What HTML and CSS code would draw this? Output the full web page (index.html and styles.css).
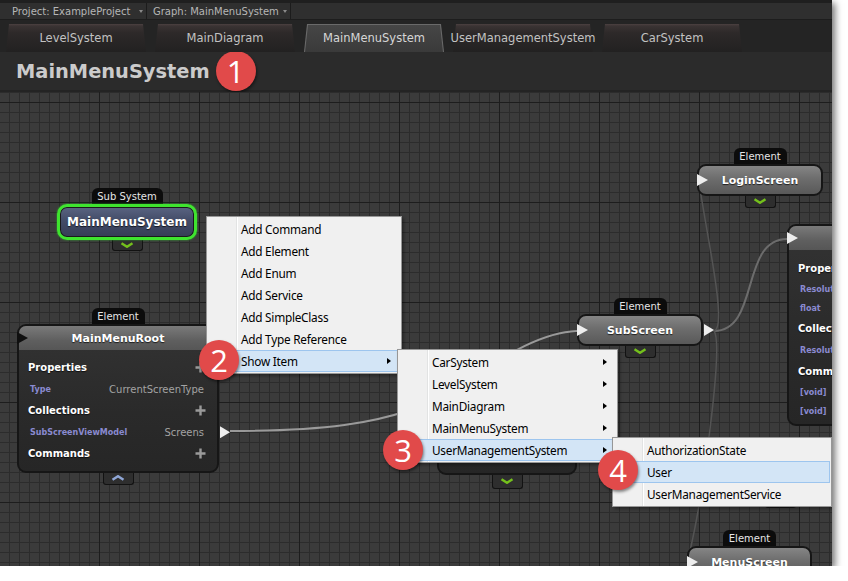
FILE: index.html
```html
<!DOCTYPE html>
<html lang="en">
<head>
<meta charset="utf-8">
<title>MainMenuSystem</title>
<link rel="stylesheet" href="styles.css">
</head>
<body>
<div class="window">
  <div class="topstrip"></div>
  <div class="toolbar">
    <div class="tb-item tb-project"><span>Project: ExampleProject</span><span class="caret"></span></div>
    <div class="tb-item tb-graph"><span>Graph: MainMenuSystem</span><span class="caret"></span></div>
  </div>
  <div class="tabs">
    <div class="tab"><span class="tab-text">LevelSystem</span></div>
    <div class="tab"><span class="tab-text">MainDiagram</span></div>
    <div class="tab active"><span class="tab-text">MainMenuSystem</span></div>
    <div class="tab"><span class="tab-text">UserManagementSystem</span></div>
    <div class="tab"><span class="tab-text">CarSystem</span></div>
  </div>
  <div class="titlebar">
    <h1 class="title">MainMenuSystem</h1>
    <span class="badge">1</span>
  </div>
  <div class="canvas">
    <svg class="wires" width="832" height="474" viewBox="0 0 832 474">
      <path class="wire light" d="M230,339 C330,339 375,330 410,318 C460,301 520,241 577,239"/>
      <path class="wire" d="M714,239 C760,239 740,147 787,147"/>
      <path class="wire faint" d="M714,239 C728,236 706,140 700,96"/>
      <path class="wire faint" d="M714,239 C724,252 702,410 689,463"/>
    </svg>

    <!-- Sub System node -->
    <div class="nw nw-subsys">
      <div class="label label-sub">Sub System</div>
      <div class="node subsys">MainMenuSystem</div>
      <div class="chev chev-sub"><svg width="14" height="6" viewBox="0 0 14 6"><path d="M1.5 1.2 L7 4.8 L12.5 1.2" class="chev-down"/></svg></div>
    </div>

    <!-- MainMenuRoot element -->
    <div class="nw nw-root">
      <div class="label">Element</div>
      <div class="node full root">
        <div class="head"><span class="port-in dark"></span>MainMenuRoot</div>
        <div class="body">
          <div class="row sec"><span>Properties</span><svg class="plus" width="11" height="11" viewBox="0 0 11 11"><path d="M5.5 0.5 V10.5 M0.5 5.5 H10.5"/></svg></div>
          <div class="row item"><span class="ptype">Type</span><span class="pval">CurrentScreenType</span></div>
          <div class="row sec"><span>Collections</span><svg class="plus" width="11" height="11" viewBox="0 0 11 11"><path d="M5.5 0.5 V10.5 M0.5 5.5 H10.5"/></svg></div>
          <div class="row item"><span class="ptype">SubScreenViewModel</span><span class="pval">Screens</span><span class="port-out side"></span></div>
          <div class="row sec"><span>Commands</span><svg class="plus" width="11" height="11" viewBox="0 0 11 11"><path d="M5.5 0.5 V10.5 M0.5 5.5 H10.5"/></svg></div>
        </div>
      </div>
      <div class="chev chev-root"><svg width="14" height="6" viewBox="0 0 14 6"><path d="M1.5 4.8 L7 1.2 L12.5 4.8" class="chev-up"/></svg></div>
    </div>

    <!-- LoginScreen -->
    <div class="nw nw-login">
      <div class="label">Element</div>
      <div class="node gray"><span class="port-in"></span>LoginScreen</div>
      <div class="chev"><svg width="14" height="6" viewBox="0 0 14 6"><path d="M1.5 1.2 L7 4.8 L12.5 1.2" class="chev-down"/></svg></div>
    </div>

    <!-- SubScreen -->
    <div class="nw nw-sub">
      <div class="label">Element</div>
      <div class="node gray"><span class="port-in"></span>SubScreen<span class="port-out"></span></div>
      <div class="chev"><svg width="14" height="6" viewBox="0 0 14 6"><path d="M1.5 1.2 L7 4.8 L12.5 1.2" class="chev-down"/></svg></div>
    </div>

    <!-- right partial element (cut by the window edge) -->
    <div class="nw nw-right">
      <div class="node full right">
        <div class="head"><span class="port-in"></span></div>
        <div class="body body-right">
          <div class="row sec r21"><span>Proper</span></div>
          <div class="row item r20"><span class="ptype">Resolut</span></div>
          <div class="row item r18"><span class="ptype">float</span></div>
          <div class="row sec r22"><span>Collect</span></div>
          <div class="row item r22"><span class="ptype">Resolut</span></div>
          <div class="row sec r21"><span>Comm</span></div>
          <div class="row item r21"><span class="ptype">[void]</span></div>
          <div class="row item r17"><span class="ptype">[void]</span></div>
        </div>
      </div>
    </div>

    <!-- node hidden behind the submenu -->
    <div class="nw nw-hidden">
      <div class="node hidden-node"></div>
      <div class="chev chev-hidden"><svg width="14" height="6" viewBox="0 0 14 6"><path d="M1.5 1.2 L7 4.8 L12.5 1.2" class="chev-down"/></svg></div>
    </div>
    <div class="nw nw-tab">
      <div class="chev"></div>
    </div>

    <!-- MenuScreen -->
    <div class="nw nw-menu">
      <div class="label">Element</div>
      <div class="node gray"><span class="port-in"></span>MenuScreen</div>
    </div>

    <!-- context menus -->
    <div class="menu menu-1">
      <div class="mi">Add Command</div>
      <div class="mi">Add Element</div>
      <div class="mi">Add Enum</div>
      <div class="mi">Add Service</div>
      <div class="mi">Add SimpleClass</div>
      <div class="mi">Add Type Reference</div>
      <div class="mi hl">Show Item<span class="arr"></span></div>
    </div>
    <div class="menu menu-2">
      <div class="mi">CarSystem<span class="arr"></span></div>
      <div class="mi">LevelSystem<span class="arr"></span></div>
      <div class="mi">MainDiagram<span class="arr"></span></div>
      <div class="mi">MainMenuSystem<span class="arr"></span></div>
      <div class="mi hl">UserManagementSystem<span class="arr"></span></div>
    </div>
    <div class="menu menu-3">
      <div class="mi">AuthorizationState</div>
      <div class="mi hl">User</div>
      <div class="mi">UserManagementService</div>
    </div>

    <span class="badge abs b2">2</span>
    <span class="badge abs b3">3</span>
    <span class="badge abs b4">4</span>
  </div>
</div>
</body>
</html>
```

FILE: styles.css
```css
* { box-sizing: border-box; }
html, body { margin: 0; padding: 0; background: #ffffff; }
body { font-family: "DejaVu Sans", sans-serif; }

.window {
  width: 832px;
  height: 566px;
  background: #2a2a2a;
  box-shadow: 3px 3px 7px rgba(0, 0, 0, 0.55);
  display: flex;
  flex-direction: column;
  overflow: hidden;
}

.topstrip { height: 3px; background: #1f1f1f; flex: none; }

.toolbar {
  height: 17px;
  flex: none;
  background: #2f2f2f;
  border-bottom: 1px solid #1d1d1d;
  display: flex;
  padding-left: 6px;
}
.tb-item {
  display: flex;
  align-items: center;
  justify-content: space-between;
  padding: 0 3px 0 6px;
  font-size: 10px;
  color: #b6b6b6;
  border-right: 1px solid #1c1c1c;
}
.tb-project { width: 141px; }
.tb-graph { width: 144px; }
.caret {
  width: 0; height: 0;
  border-left: 2.5px solid transparent;
  border-right: 2.5px solid transparent;
  border-top: 3px solid #8a8a8a;
}

.tabs {
  height: 32px;
  flex: none;
  background: #242424;
  display: flex;
  gap: 9px;
  padding: 4px 0 0 6px;
}
.tab {
  position: relative;
  width: 140px;
  height: 28px;
  display: flex;
  align-items: center;
  justify-content: center;
  white-space: nowrap;
}
.tab::before {
  content: "";
  position: absolute;
  inset: 0;
  clip-path: polygon(3px 0, calc(100% - 3px) 0, 100% 100%, 0 100%);
  background: linear-gradient(to bottom, #4c4141 0, #3a3333 2px, #2d2929 9px, #222121 100%);
}
.tab.active::before { background: #6a6a6a; }
.tab.active::after {
  content: "";
  position: absolute;
  inset: 1px 1px 0 1px;
  clip-path: polygon(3px 0, calc(100% - 3px) 0, 100% 100%, 0 100%);
  background: linear-gradient(#464646, #3a3a3a);
}
.tab-text {
  position: relative;
  z-index: 1;
  font-size: 11.5px;
  color: #c2c2c2;
}
.tab.active .tab-text { color: #d6d6d6; }

.titlebar {
  height: 40px;
  flex: none;
  background: #2b2b2b;
  border-bottom: 2px solid #242424;
  display: flex;
  align-items: center;
  gap: 6px;
  padding-left: 16px;
}
.title {
  margin: 0;
  font-size: 19.4px;
  font-weight: bold;
  color: #cbcbcb;
}

.badge {
  width: 40px;
  height: 40px;
  flex: none;
  border-radius: 50%;
  background: #e14a4a;
  color: #ffffff;
  font-family: "Open Sans", "Noto Sans", sans-serif;
  font-size: 31px;
  line-height: 1;
  display: flex;
  align-items: center;
  justify-content: center;
  box-shadow: 1px 2px 3px rgba(0, 0, 0, 0.45);
}
.badge.abs { position: absolute; }
.b2 { left: 199px; top: 248px; }
.b3 { left: 383px; top: 338px; }
.b4 { left: 598px; top: 358px; }

/* canvas with grid */
.canvas {
  position: relative;
  flex: 1;
  overflow: hidden;
  background-color: #3b3b3b;
  background-image:
    linear-gradient(to right, transparent 99px, #1d1d1d 99px, #1d1d1d 100px, transparent 100px),
    linear-gradient(to bottom, transparent 10px, #1d1d1d 10px, #1d1d1d 11px, transparent 11px),
    linear-gradient(to right, transparent 9px, #2c2c2c 9px),
    linear-gradient(to bottom, #2c2c2c 1px, transparent 1px);
  background-size: 100px 100%, 100% 100px, 10px 10px, 10px 10px;
}
.wires { position: absolute; left: 0; top: 0; }
.wire { fill: none; stroke: #6c6c6c; stroke-width: 2; }
.wire.light { stroke: #9a9a9a; }
.wire.faint { stroke: #545454; stroke-width: 1.5; }

/* node wrappers */
.nw {
  position: absolute;
  display: flex;
  flex-direction: column;
  align-items: center;
}
.nw-subsys { left: 57px; top: 96px; width: 140px; }
.nw-root { left: 17px; top: 216px; width: 202px; }
.nw-login { left: 697px; top: 56px; width: 126px; }
.nw-sub { left: 577px; top: 206px; width: 126px; }
.nw-menu { left: 687px; top: 438px; width: 125px; }
.nw-right { left: 787px; top: 132px; width: 200px; }
.nw-hidden { left: 437px; top: 308px; width: 140px; }
.nw-tab { left: 765px; top: 404px; width: 31px; }

.label {
  width: 53px;
  height: 16px;
  background: #0c0c0c;
  color: #e6e6e6;
  font-size: 10px;
  border-radius: 6px 6px 0 0;
  display: flex;
  align-items: center;
  justify-content: center;
}
.label-sub { width: 71px; }

.node {
  position: relative;
  width: 100%;
  border: 2px solid #161616;
  border-radius: 9px;
  color: #ffffff;
  font-weight: bold;
  font-size: 11px;
  text-shadow: 0 1px 1px rgba(0, 0, 0, 0.7);
}
.node.gray {
  height: 32px;
  display: flex;
  align-items: center;
  justify-content: center;
  background: linear-gradient(#858585, #6d6d6d 45%, #595959);
}
.node.subsys {
  height: 36px;
  border: 3px solid #3fe42f;
  border-radius: 10px;
  box-shadow: 0 0 2px #2fb52a, inset 0 0 0 1px #1a1a1a;
  background: linear-gradient(#5a6482, #434c68 45%, #353d55);
  display: flex;
  align-items: center;
  justify-content: center;
  font-size: 12px;
}
.node.full {
  background: linear-gradient(#333333, #2a2a2a 60%, #262626);
}
.node.root { height: 149px; }
.node.right { height: 202px; }
.head {
  position: relative;
  height: 24px;
  border-radius: 7px 7px 0 0;
  background: linear-gradient(#7a7a7a, #5f5f5f 60%, #565656);
  display: flex;
  align-items: center;
  justify-content: center;
}
.body { padding: 7px 11px 0 9px; }
.row {
  position: relative;
  height: 21.5px;
  display: flex;
  align-items: center;
  justify-content: space-between;
}
.row.sec { font-size: 10px; color: #ffffff; }
.row.item { padding-left: 2px; padding-right: 2px; }
.ptype { font-size: 8px; font-weight: bold; color: #8a8ad0; text-shadow: none; }
.pval { font-size: 10px; font-weight: normal; color: #a3a3a3; text-shadow: none; }
.plus { fill: none; stroke: #9a9a9a; stroke-width: 2.4; }

.body-right { padding: 8px 0 0 9px; }
.r17 { height: 17px; }
.r18 { height: 18px; }
.r20 { height: 20px; }
.r21 { height: 21px; }
.r22 { height: 22px; }

.hidden-node {
  height: 75px;
  background: linear-gradient(#2e2e2e, #262626);
}

.port-in {
  position: absolute;
  left: -2px;
  top: 50%;
  width: 11px;
  height: 12px;
  margin-top: -6px;
  background: #eeeeee;
  clip-path: polygon(0 0, 100% 50%, 0 100%);
}
.port-in.dark { background: #0f0f0f; }
.port-out {
  position: absolute;
  right: -13px;
  top: 50%;
  width: 10px;
  height: 12px;
  margin-top: -6px;
  background: #eeeeee;
  clip-path: polygon(0 0, 100% 50%, 0 100%);
}
.port-out.side { right: -24px; }

.chev {
  width: 31px;
  height: 13px;
  margin-top: -1px;
  background: #2e2e2e;
  border: 1px solid #121212;
  border-top: none;
  border-radius: 0 0 3px 3px;
  display: flex;
  align-items: center;
  justify-content: center;
}
.chev-sub { height: 12px; }
.chev-hidden { height: 15px; }
.chev-down { fill: none; stroke: #74c01c; stroke-width: 2.4; }
.chev-up { fill: none; stroke: #8fa6d6; stroke-width: 2.4; }

/* windows style context menus */
.menu {
  position: absolute;
  background-color: #f0f0f0;
  background-image: linear-gradient(to right, transparent 29px, #e2e3e3 29px, #e2e3e3 30px, #ffffff 30px, #ffffff 31px, transparent 31px);
  border: 1px solid #979797;
  padding: 1px;
  box-shadow: 2px 2px 3px rgba(0, 0, 0, 0.35);
  font-family: "Noto Sans", "DejaVu Sans", sans-serif;
  font-size: 11.8px;
  letter-spacing: -0.25px;
  color: #000000;
}
.menu-1 { left: 206px; top: 124px; width: 196px; }
.menu-2 { left: 397px; top: 257px; width: 221px; }
.menu-3 { left: 612px; top: 345px; width: 220px; }
.mi {
  height: 22px;
  display: flex;
  align-items: center;
  padding-left: 32px;
  border: 1px solid transparent;
  white-space: nowrap;
}
.mi.hl { background: #d3e5f6; border-color: #9dc5ee; }
.arr {
  margin-left: auto;
  margin-right: 8px;
  width: 0; height: 0;
  border-left: 4px solid #000;
  border-top: 3.5px solid transparent;
  border-bottom: 3.5px solid transparent;
}
```
